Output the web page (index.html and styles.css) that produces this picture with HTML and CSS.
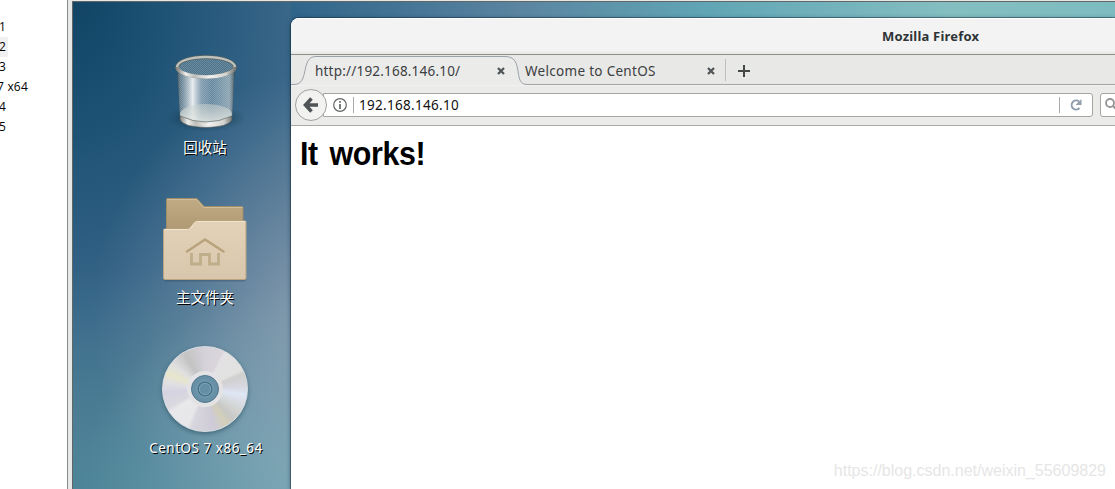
FILE: index.html
```html
<!DOCTYPE html>
<html lang="zh-CN">

<head>
  <meta charset="UTF-8">
  <meta name="viewport" content="width=device-width, initial-scale=1.0">
  <title>Mozilla Firefox</title>
  <link rel="stylesheet" href="styles.css">
</head>

<body>
  <ul class="library">
    <li>1</li>
    <li class="active"><span>2</span></li>
    <li>3</li>
    <li>7 x64</li>
    <li>4</li>
    <li>5</li>
  </ul>
  <div class="splitter"></div>
  <main class="desktop">
    <div class="icons">
      <div class="icon">
        <svg width="90" height="90" viewBox="160 43 90 90">
          <defs>
            <pattern id="mesh" width="2" height="2" patternUnits="userSpaceOnUse">
              <path d="M0 0h1v1H0zM1 1h1v1H1z" fill="#dce5e9" opacity=".22" />
            </pattern>
            <linearGradient id="glass" x1="0" x2="1" y1="0" y2="0">
              <stop offset="0" stop-color="#3e5055" stop-opacity=".9" />
              <stop offset=".08" stop-color="#8d9da5" stop-opacity=".65" />
              <stop offset=".27" stop-color="#f5f7f7" stop-opacity=".95" />
              <stop offset=".42" stop-color="#a5b7c3" stop-opacity=".7" />
              <stop offset=".6" stop-color="#8aa4b4" stop-opacity=".6" />
              <stop offset=".9" stop-color="#b4c2c7" stop-opacity=".7" />
              <stop offset="1" stop-color="#35454a" stop-opacity=".9" />
            </linearGradient>
            <linearGradient id="metal" x1="0" x2="1" y1="0" y2="0">
              <stop offset="0" stop-color="#858582" />
              <stop offset=".15" stop-color="#eeeeec" />
              <stop offset=".3" stop-color="#bdbdba" />
              <stop offset=".55" stop-color="#f1f1ef" />
              <stop offset=".85" stop-color="#d1d1ce" />
              <stop offset="1" stop-color="#777975" />
            </linearGradient>
            <linearGradient id="floor" x1="0" x2="0" y1="0" y2="1">
              <stop offset="0" stop-color="#c8d0ce" stop-opacity=".55" />
              <stop offset="1" stop-color="#eceeeb" stop-opacity=".85" />
            </linearGradient>
            <radialGradient id="shade">
              <stop offset=".5" stop-color="#102c3c" stop-opacity=".4" />
              <stop offset=".8" stop-color="#102c3c" stop-opacity=".15" />
              <stop offset="1" stop-color="#102c3c" stop-opacity="0" />
            </radialGradient>
          </defs>
          <ellipse cx="206" cy="118" rx="40" ry="14" fill="url(#shade)" />
          <path d="M177 68L180 118Q206 131 232 118L235 68Q206 86 177 68z" fill="url(#glass)" />
          <ellipse cx="206" cy="66.500" rx="28" ry="9.500" fill="#4c7389" />
          <path d="M178 66Q206 46 234 66L232 118Q206 130 180 118z" fill="url(#mesh)" />
          <ellipse cx="206" cy="114" rx="26" ry="10" fill="url(#floor)" />
          <path d="M180 116Q206 128 232 116V120Q228 127 206 127.500Q184 127 180 120z" fill="url(#metal)" stroke="#4c5555" stroke-width=".6" />
          <ellipse cx="206" cy="67" rx="28.800" ry="10" fill="none" stroke="#53605f" stroke-width="3.800" />
          <path d="M177.200 67a28.800 10 0 0 1 57.600 0" fill="none" stroke="#bfc1bd" stroke-width="2.400" />
          <path d="M177.200 67a28.800 10 0 0 0 57.600 0" fill="none" stroke="url(#metal)" stroke-width="3.600" />
        </svg>
        <span>回收站</span>
      </div>
      <div class="icon">
        <svg width="90" height="90" viewBox="160 193 90 90">
          <defs>
            <linearGradient id="back" x1="0" x2="0" y1="0" y2="1">
              <stop offset="0" stop-color="#c0ab84" />
              <stop offset="1" stop-color="#ae9873" />
            </linearGradient>
            <linearGradient id="front" x1="0" x2="0" y1="0" y2="1">
              <stop offset="0" stop-color="#e4d2b8" />
              <stop offset="1" stop-color="#d8c7ac" />
            </linearGradient>
          </defs>
          <rect x="164" y="277" width="82" height="4.500" rx="2" fill="#26394a" opacity=".3" />
          <path d="M166.500 232V199.500q0-1 1-1H196q1 0 2 1l6 7H242q1 0 1 1V232z" fill="url(#back)" stroke="#9f8c68" />
          <path d="M167.500 199.500H196.500L203.500 207.500H242.500" fill="none" stroke="#cfbc9a" />
          <path d="M163.500 230q0-1 1-1H187q2 0 3-1.500l4-5q1-1.500 3-1.500H245q1 0 1 1V278q0 1.500-1.500 1.500H165q-1.500 0-1.500-1.500z" fill="url(#front)" stroke="#baa580" />
          <path d="M164.500 229.500H187.500q2 0 3-1.500l4-5q1-1.500 3-1.500H245.500" fill="none" stroke="#f0e3cf" />
          <path d="M187 251.500L205 239.500L223.500 251.500" fill="none" stroke="#b8a37b" stroke-width="2.600" stroke-linecap="round" stroke-linejoin="round" />
          <path d="M191.500 253V264H200.500V254.500H209.500V264H218.500V253" fill="none" stroke="#c0ad89" stroke-width="2.800" />
        </svg>
        <span>主文件夹</span>
      </div>
      <div class="icon">
        <div class="disc">
          <svg width="84" height="84" viewBox="-42 -42 84 84">
            <circle r="18" fill="#e3e3e6" />
            <circle r="13.500" fill="#6790a6" stroke="#52778c" />
            <circle r="10" fill="#7299ab" opacity=".6" />
            <circle r="6.700" fill="#648fa4" stroke="#426c81" stroke-width="1.200" />
            <circle r="5.800" fill="none" stroke="#94b4c3" stroke-width=".6" />
          </svg>
        </div>
        <span class="latin">CentOS 7 x86_64</span>
      </div>
    </div>
    <section class="browser">
      <header class="titlebar">Mozilla Firefox</header>
      <nav class="tabs">
        <svg class="tab-shape" width="236" height="30" viewBox="0 0 236 30">
          <path d="M0 29.500H3C19 29.500 9 1.500 25 1.500H214C234 1.500 221 29.500 236 29.500V30H0z" fill="#ebebea" />
          <path d="M0 29.500H3C19 29.500 9 1.500 25 1.500H214C234 1.500 221 29.500 236 29.500" fill="none" stroke="#9ba1aa" />
        </svg>
        <div class="tab">
          <span class="address">http://192.168.146.10/</span>
          <svg width="8" height="8" viewBox="0 0 8 8"><path d="M1 1l6 6M7 1L1 7" stroke="#505557" stroke-width="2.300" /></svg>
        </div>
        <div class="tab">
          <span>Welcome to CentOS</span>
          <svg width="8" height="8" viewBox="0 0 8 8"><path d="M1 1l6 6M7 1L1 7" stroke="#505557" stroke-width="2.300" /></svg>
        </div>
        <svg class="new-tab" width="12" height="12" viewBox="0 0 12 12"><path d="M6 0v12M0 6h12" stroke="#454849" stroke-width="2" /></svg>
      </nav>
      <div class="toolbar">
        <div class="back">
          <svg width="16" height="16" viewBox="0 0 16 16"><path d="M8.500 1.500L2.500 8L8.500 14.500M3 8H15" fill="none" stroke="#505355" stroke-width="3.600" /></svg>
        </div>
        <div class="urlbar">
          <svg width="14" height="14" viewBox="0 0 14 14">
            <circle cx="7" cy="7" r="6.300" fill="none" stroke="#626566" stroke-width="1.200" />
            <path d="M7 3v1.800M7 6v5" stroke="#626566" stroke-width="1.700" />
          </svg>
          <span class="url">192.168.146.10</span>
          <svg class="reload" width="12" height="12" viewBox="0 0 12 12">
            <path d="M9.500 9A4.500 4.500 0 1 1 9 2.500" fill="none" stroke="#929eae" stroke-width="2" />
            <path d="M11.500 0V6H5.500z" fill="#929eae" />
          </svg>
        </div>
        <div class="search">
          <svg width="12" height="12" viewBox="0 0 12 12"><path d="M8 8l4 4" stroke="#959595" stroke-width="2.200" /><circle cx="5" cy="5" r="4" fill="none" stroke="#959595" stroke-width="1.800" /></svg>
        </div>
      </div>
      <article class="page">
        <h1>It works!</h1>
      </article>
    </section>
  </main>
  <div class="watermark">https://blog.csdn.net/weixin_55609829</div>
</body>

</html>
```

FILE: styles.css
```css
* {
  box-sizing: border-box;
  margin: 0;
  padding: 0;
}

body {
  display: flex;
  height: 489px;
  overflow: hidden;
  position: relative;
  background: #fff;
  font-family: "Noto Sans", "Noto Sans CJK SC", sans-serif;
}

svg {
  display: block;
  flex: none;
}

/* virtual machine list */
.library {
  flex: 0 0 67px;
  padding-top: 17px;
  list-style: none;
  font: 12px/20px "Open Sans", sans-serif;
  color: #000;
}

.library li {
  height: 20px;
  margin-left: -1px;
  white-space: nowrap;
}

.library li:nth-child(4) {
  margin-left: -3px;
  letter-spacing: .2px;
}

.library .active {
  width: 9px;
  background: #f0f0f0;
}

.splitter {
  flex: 0 0 5px;
  background: #e5e8e7;
  border-left: 1px solid #8c8c8c;
}

.desktop {
  flex: 1;
  display: flex;
  min-width: 0;
  margin-top: 1px;
  border-top: 1px solid #626765;
  border-left: 1px solid #626765;
  box-shadow: 0 -1px #e5e8e7;
  background:
    linear-gradient(90deg, #30658a, #5b85a1 28%, #60a5b5 50%, #84bec1 80%, #7cbcc1) 218px 0 / 824px 24px no-repeat,
    radial-gradient(ellipse 230px 240px at 250px 310px, rgba(168, 175, 190, .6), rgba(168, 175, 190, .28) 50%, rgba(168, 175, 190, 0)),
    radial-gradient(ellipse 240px 200px at 250px 480px, rgba(142, 185, 196, .65), rgba(142, 185, 196, 0)),
    linear-gradient(to top, rgba(76, 135, 152, .75), rgba(76, 135, 152, 0) 45%),
    radial-gradient(ellipse 410px 600px at 0 0, #114465 0, #1b5073 18%, #346386 48%, #4b7592 70%, #628ca5 100%);
}

.icons {
  flex: 0 0 218px;
  padding: 41px 0 0 46px;
}

.icon {
  width: 172px;
  height: 150px;
  display: flex;
  flex-direction: column;
  align-items: center;
}

.icon span {
  margin-top: 2px;
  font: 14.5px/23px "Noto Sans CJK SC", sans-serif;
  color: #fff;
  text-shadow: 1px 1px #000;
}

.icon .latin {
  margin-top: 6px;
  padding-left: 2px;
  font: 13.5px/20px "Noto Sans", sans-serif;
  letter-spacing: .5px;
}

.disc {
  width: 86px;
  height: 86px;
  margin-top: 3px;
  border-radius: 50%;
  border: 1px solid #d8dde1;
  box-shadow: 0 2px 4px rgba(30, 65, 80, .5);
  background: conic-gradient(from 0deg, #d5d2da 0, #d9d5da 24deg, #e3e1e3 29deg, #e2e2e1 62deg, #d0d0ce 68deg, #d6d6df 85deg, #dfe6f5 98deg, #d4d6d6 120deg, #c8c8c5 137deg, #d3cfb9 150deg, #cecbd7 165deg, #d7d5dd 198deg, #e7e6e9 206deg, #e9e9ec 235deg, #dad8df 244deg, #d6d3e1 265deg, #e1e0e2 280deg, #e7e6cb 292deg, #e0dfe0 308deg, #c3c3c3 330deg, #d5d2da 360deg);
}

/* firefox window */
.browser {
  flex: 1;
  min-width: 0;
  margin-top: 16px;
  overflow: hidden;
  border-radius: 8px 0 0;
  background: #fff;
  box-shadow: 0 0 0 1px rgba(15, 45, 65, .45), 0 1px 5px rgba(0, 20, 35, .5);
}

.titlebar {
  height: 37px;
  padding-left: 591px;
  border-top: 1px solid #fff;
  border-bottom: 1px solid #8f908c;
  background: linear-gradient(#f3f3f3 90%, #e6e6e5);
  font: bold 13px/35px "Noto Sans", sans-serif;
  letter-spacing: .2px;
  color: #2e3436;
}

.tabs {
  display: flex;
  align-items: center;
  height: 30px;
  padding-left: 24px;
  position: relative;
  background: #e8e8e6;
  border-bottom: 1px solid #a5a5a2;
}

.tab-shape {
  position: absolute;
  left: 0;
  top: 0;
}

.tab {
  width: 210px;
  height: 22px;
  padding-right: 20px;
  display: flex;
  align-items: center;
  position: relative;
  font: 13.5px/22px "Noto Sans", sans-serif;
  letter-spacing: .3px;
  color: #3b4042;
}

.tab span {
  margin-top: 2px;
}

.tab svg {
  margin: 2px 0 0 auto;
}

.tab + .tab {
  width: 201px;
  padding-right: 10px;
  border-right: 1px solid #bfc0be;
}

.tab .address {
  letter-spacing: .2px;
}

.new-tab {
  margin: 2px 0 0 12px;
}

.toolbar {
  height: 41px;
  padding: 0 0 1px 4px;
  display: flex;
  align-items: center;
  background: #ebebe9;
  border-top: 1px solid #f1f1f0;
  border-bottom: 1px solid #aaa9a5;
}

.back {
  flex: none;
  width: 32px;
  height: 32px;
  display: grid;
  place-items: center;
  position: relative;
  z-index: 1;
  border: 1px solid #a1a19e;
  border-radius: 50%;
  background: #f2f2f1;
}

.urlbar {
  flex: none;
  width: 770px;
  height: 24px;
  margin-left: -4px;
  padding-left: 9px;
  display: flex;
  align-items: center;
  border: 1px solid #a5a5a2;
  border-radius: 0 3px 3px 0;
  background: #fff;
}

.url {
  height: 16px;
  margin-left: 6px;
  padding-left: 5px;
  border-left: 1px solid #aaa;
  font: 13.5px/16px "Noto Sans", sans-serif;
  letter-spacing: .3px;
  color: #111;
}

.reload {
  box-sizing: content-box;
  margin-left: auto;
  padding: 2px 10px;
  border-left: 1px solid #aaa;
}

.search {
  width: 40px;
  height: 24px;
  margin-left: 7px;
  padding: 4px;
  flex: none;
  border: 1px solid #a5a5a2;
  border-radius: 3px;
  background: #fff;
}

.page {
  padding: 8px 9px;
}

.page h1 {
  font: bold 33px/40px "Liberation Sans", sans-serif;
  letter-spacing: -.4px;
  word-spacing: 4px;
  transform: scaleX(.92);
  transform-origin: left;
  color: #000;
}

.watermark {
  position: absolute;
  right: 9px;
  bottom: 9px;
  font: 16px/18px "Liberation Sans", sans-serif;
  color: #e6e6e6;
}
```
